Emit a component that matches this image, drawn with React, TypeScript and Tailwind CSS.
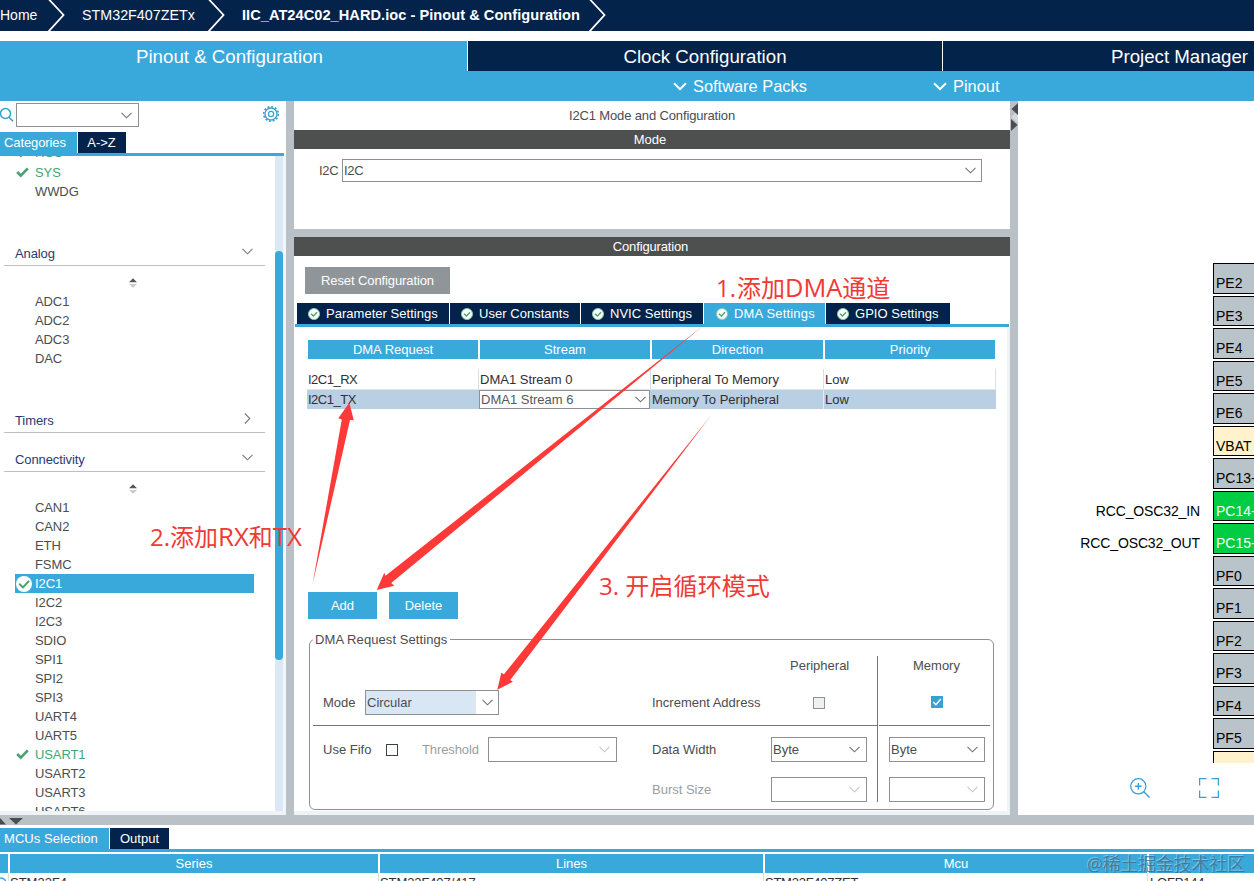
import React from "react";
import clsx from "clsx";

const analogItems = ["ADC1", "ADC2", "ADC3", "DAC"];

const connectivityItems = [
    "CAN1", "CAN2", "ETH", "FSMC", "I2C1", "I2C2", "I2C3", "SDIO", "SPI1",
    "SPI2", "SPI3", "UART4", "UART5", "USART1", "USART2", "USART3", "USART6",
];

const configTabs = [
    { label: "Parameter Settings", width: "w-[152px]" },
    { label: "User Constants", width: "w-[130px]" },
    { label: "NVIC Settings", width: "w-[122px]" },
    { label: "DMA Settings", width: "w-[121px]", active: true },
    { label: "GPIO Settings", width: "w-[124px]" },
];

const pins = [
    { name: "PE2" },
    { name: "PE3" },
    { name: "PE4" },
    { name: "PE5" },
    { name: "PE6" },
    { name: "VBAT", kind: "power" },
    { name: "PC13-" },
    { name: "PC14-", kind: "used", signal: "RCC_OSC32_IN" },
    { name: "PC15-", kind: "used", signal: "RCC_OSC32_OUT" },
    { name: "PF0" },
    { name: "PF1" },
    { name: "PF2" },
    { name: "PF3" },
    { name: "PF4" },
    { name: "PF5" },
    { name: "", kind: "power" },
];

const Chevron: React.FC<{ className?: string }> = ({ className }) => (
    <svg width="11" height="7" viewBox="0 0 11 7" fill="none" className={clsx("shrink-0", className)}>
        <path d="M0.5 0.8 5.5 5.8 10.5 0.8" stroke="currentColor" strokeWidth="1.1" />
    </svg>
);

const WideChevron: React.FC = () => (
    <svg width="14" height="9" viewBox="0 0 14 9" fill="none" className="shrink-0">
        <path d="M1 1.2 7 7.2 13 1.2" stroke="white" strokeWidth="2" />
    </svg>
);

const Check: React.FC = () => (
    <svg width="13" height="11" viewBox="0 0 13 11" fill="none">
        <path d="M1.2 5 4.8 8.6 11.8 1.4" stroke="#45a572" strokeWidth="2.7" />
    </svg>
);

const CheckCircle: React.FC<{ size: number }> = ({ size }) => (
    <svg width={size} height={size} viewBox="0 0 16 16" fill="none" className="shrink-0">
        <circle cx="8" cy="8" r="8" fill="white" />
        <path d="M3.2 7.8 7 11.4 13 4.8" stroke="#3fa56b" strokeWidth="2" />
    </svg>
);

const TabCheck: React.FC = () => (
    <svg width="12" height="12" viewBox="0 0 12 12" fill="none" className="shrink-0">
        <circle cx="6" cy="6" r="5.5" fill="white" stroke="#8ccba6" />
        <path d="M3 5.8 5.4 8.1 9 4.2" stroke="#3fa56b" strokeWidth="1.4" />
    </svg>
);

const Combo: React.FC<{ value?: string; disabled?: boolean; className?: string }> = ({ value, disabled, className }) => (
    <div className={clsx("flex items-center justify-between border border-[#8d9196] bg-white pl-px", className)}>
        <span>{value}</span>
        <Chevron className={disabled ? "text-[#c3c6ca]" : "text-[#6f7377]"} />
    </div>
);

const Crumb: React.FC = () => (
    <svg width="17" height="31" viewBox="0 0 17 31" fill="none" className="shrink-0">
        <path d="M1 -0.5 15.5 15 0.5 31.5" stroke="white" strokeWidth="1.8" />
    </svg>
);

const SortArrows: React.FC = () => (
    <div className="flex h-[26px] shrink-0 justify-center pr-[9px] pt-3">
        <svg width="10" height="10" viewBox="0 0 10 10">
            <path d="M1 4.3 5 0.3 9 4.3Z" fill="#55585b" />
            <path d="M1 6 5 9.8 9 6Z" fill="#c9cbcd" />
        </svg>
    </div>
);

const SectionHeader: React.FC<{ title: string; open?: boolean; className?: string }> = ({ title, open, className }) => (
    <div className={clsx("ml-1 flex h-6 w-[261px] shrink-0 justify-between border-b border-[#bcbfc6] pl-[11px] pr-3 text-[#2c3873]", className)}>
        <span className="h-[23px] leading-[23px] tracking-[-0.1px]">{title}</span>
        <Chevron className={clsx("mt-1.5 text-[#77797c]", !open && "-rotate-90")} />
    </div>
);

const Item: React.FC<{ name: string }> = ({ name }) => {
    const selected = name === "I2C1";
    const enabled = ["RCC", "SYS", "USART1"].includes(name);
    return (
        <div
            className={clsx(
                "ml-[15px] flex h-[19px] w-[239px] shrink-0 items-center tracking-[-0.1px]",
                selected && "bg-[#39a9dc] text-white",
                enabled && "text-[#45a572]"
            )}
        >
            <span className="w-5 pl-px">
                {selected && <CheckCircle size={16} />}
                {enabled && <Check />}
            </span>
            {name}
        </div>
    );
};

const Header: React.FC = () => (
    <header className="shrink-0 text-white">
        <div className="flex h-[31px] items-center bg-[#03234b] text-sm">
            <span className="w-12 shrink-0 pb-px">Home</span>
            <Crumb />
            <span className="w-[143px] shrink-0 pl-[17px] text-[14.3px]">STM32F407ZETx</span>
            <Crumb />
            <span className="w-[364px] shrink-0 whitespace-nowrap pl-[17px] text-[14.6px] font-bold tracking-[0.04px]">
                IIC_AT24C02_HARD.ioc - Pinout &amp; Configuration
            </span>
            <Crumb />
        </div>
        <div className="mt-2.5 flex h-[30px] bg-white text-center text-[18.7px] leading-8">
            <div className="w-[467px] shrink-0 bg-[#39a9dc] pr-2">Pinout &amp; Configuration</div>
            <div className="ml-px w-[474px] shrink-0 bg-[#03234b]">Clock Configuration</div>
            <div className="ml-px w-[473px] shrink-0 bg-[#03234b]">Project Manager</div>
        </div>
        <div className="flex h-[30px] items-center bg-[#39a9dc] pl-[673px] text-[16.4px] leading-6">
            <div className="flex w-[260px] items-center gap-1.5">
                <WideChevron />
                <span>Software Packs</span>
            </div>
            <div className="flex items-center gap-1.5">
                <WideChevron />
                <span>Pinout</span>
            </div>
        </div>
    </header>
);

const Sidebar: React.FC = () => (
    <aside className="flex w-[286px] shrink-0 flex-col bg-white">
        <div className="flex h-[31px] items-start pt-0.5">
            <svg width="14" height="16" viewBox="0 0 14 16" fill="none" className="mt-1">
                <circle cx="5.5" cy="6.5" r="5" stroke="#39a0d4" strokeWidth="1.5" />
                <path d="M9 10.2 13 14.2" stroke="#39a0d4" strokeWidth="1.6" />
            </svg>
            <Combo className="ml-0.5 h-6 w-[123px] pr-1.5" />
            <svg width="18" height="18" viewBox="0 0 18 18" fill="none" className="ml-[123px] mt-0.5">
                <circle cx="9" cy="9" r="6" stroke="#39a0d4" strokeWidth="1.3" />
                <circle cx="9" cy="9" r="7.3" stroke="#39a0d4" strokeWidth="1.6" strokeDasharray="2 1.82" />
                <circle cx="9" cy="9" r="2.6" stroke="#39a0d4" strokeWidth="1.2" />
            </svg>
        </div>
        <div className="flex h-6 w-[284px] gap-px border-b-[3px] border-[#39a9dc] leading-[21px] text-white">
            <div className="w-[77px] bg-[#39a9dc] pl-1 tracking-[-0.1px]">Categories</div>
            <div className="w-12 bg-[#03234b] pr-px text-center">A-&gt;Z</div>
        </div>
        <div className="flex h-[656px] border-b border-[#eef2f6]">
            <div className="flex w-[275px] flex-col overflow-hidden">
                <div className="-mt-[13px] flex flex-col">
                    <Item name="RCC" />
                    <div className="h-px" />
                    <Item name="SYS" />
                    <Item name="WWDG" />
                </div>
                <SectionHeader title="Analog" open className="mt-[41px]" />
                <SortArrows />
                {analogItems.map((name) => (
                    <Item key={name} name={name} />
                ))}
                <SectionHeader title="Timers" className="mt-[41px]" />
                <SectionHeader title="Connectivity" open className="mt-[15px]" />
                <SortArrows />
                {connectivityItems.map((name) => (
                    <Item key={name} name={name} />
                ))}
            </div>
            <div className="w-2 bg-[#dbe8f5] pt-[95px]">
                <div className="h-[409px] rounded-full bg-[#39a9dc]" />
            </div>
            <div className="w-[3px] bg-[#f1f6fa]" />
        </div>
        <div className="flex-1 bg-[#f1f4f6]" />
    </aside>
);

const CheckBox: React.FC<{ className?: string }> = ({ className }) => (
    <div className={clsx("size-3 shrink-0 border", className)} />
);

const RequestTable: React.FC = () => (
    <div className="ml-[13px] w-[689px] text-[#2e3033]">
        <div className="ml-px flex h-[19px] gap-0.5 text-center leading-[19px] text-white">
            <div className="w-[170px] bg-[#39a9dc]">DMA Request</div>
            <div className="w-[170px] bg-[#39a9dc]">Stream</div>
            <div className="w-[171px] bg-[#39a9dc]">Direction</div>
            <div className="w-[170px] bg-[#39a9dc]">Priority</div>
        </div>
        <div className="mt-2.5 flex h-[21px] border-b border-[#e2e5e8] leading-[22px]">
            <div className="w-[172px] border-r border-[#dcdfe2] pl-px tracking-[-0.5px]">I2C1_RX</div>
            <div className="w-[172px] border-r border-[#dcdfe2] pl-px">DMA1 Stream 0</div>
            <div className="w-[173px] border-r border-[#dcdfe2] pl-px">Peripheral To Memory</div>
            <div className="w-[172px] border-r border-[#dcdfe2] pl-px">Low</div>
        </div>
        <div className="flex h-[19px] bg-[#b8cfe4] leading-5">
            <div className="w-[172px] pl-px tracking-[-0.5px]">I2C1_TX</div>
            <Combo value="DMA1 Stream 6" className="w-[171px] pr-[3px] leading-[17px] text-[#55585c]" />
            <div className="w-[174px] border-r border-[#e4ebf2] pl-0.5">Memory To Peripheral</div>
            <div className="pl-px">Low</div>
        </div>
    </div>
);

const RequestSettings: React.FC = () => (
    <div className="ml-[15px] mt-5 flex h-[171px] w-[685px] rounded-md border border-[#8d9196]">
        <div className="flex w-[568px] flex-col">
            <div className="-mt-2 ml-[3px] h-4 w-[137px] whitespace-nowrap bg-white pl-0.5 leading-4 tracking-[0.08px]">
                DMA Request Settings
            </div>
            <div className="ml-[3px] mt-2 flex h-[70px] flex-col border-b border-[#4f81a8] pl-[10px]">
                <div className="flex h-5 items-center pl-[467px]">Peripheral</div>
                <div className="mt-[14px] flex h-[25px] items-center">
                    <span className="w-[42px]">Mode</span>
                    <div className="flex h-[25px] w-[134px] items-center border border-[#8d9196]">
                        <span className="h-full w-[110px] bg-[#d9e7f5] pl-px leading-[23px]">Circular</span>
                        <Chevron className="ml-1.5 text-[#6f7377]" />
                    </div>
                    <span className="ml-[153px] w-[161px]">Increment Address</span>
                    <CheckBox className="border-[#8d9196] bg-[#eef1f2]" />
                </div>
            </div>
            <div className="mt-[11px] flex h-[25px] items-center pl-[13px]">
                <span className="w-[63px]">Use Fifo</span>
                <CheckBox className="border-[#3f4245] bg-white" />
                <span className="ml-6 w-[66px] tracking-[-0.1px] text-[#9b9ea1]">Threshold</span>
                <Combo disabled className="h-[25px] w-[129px] pr-1.5" />
                <span className="ml-[35px] w-[119px]">Data Width</span>
                <Combo value="Byte" className="h-[25px] w-[96px] pr-1.5" />
            </div>
            <div className="mt-[15px] flex h-[25px] items-center pl-[342px] text-[#9b9ea1]">
                <span className="w-[119px]">Burst Size</span>
                <Combo disabled className="h-[25px] w-[96px] pr-1.5" />
            </div>
        </div>
        <div className="-ml-px mt-4 h-[146px] w-px shrink-0 bg-[#4f81a8]" />
        <div className="ml-px mt-4 flex h-[147px] w-[111px] flex-col">
            <div className="h-[70px] border-b border-[#4f81a8] pl-[34px]">
                <div className="h-5 leading-5">Memory</div>
                <div className="ml-[18px] mt-5 size-3 bg-[#39a0d4]">
                    <svg width="12" height="12" viewBox="0 0 12 12" fill="none">
                        <path d="M2.3 5.9 4.9 8.7 9.8 3" stroke="white" strokeWidth="1.4" />
                    </svg>
                </div>
            </div>
            <Combo value="Byte" className="ml-2.5 mt-[11px] h-[25px] w-[96px] pr-1.5" />
            <Combo disabled className="ml-2.5 mt-[15px] h-[25px] w-[96px] pr-1.5" />
        </div>
    </div>
);

const ConfigPanel: React.FC = () => (
    <main className="flex w-[716px] shrink-0 flex-col">
        <div className="h-[29px] bg-white text-center leading-[29px] tracking-[-0.14px]">I2C1 Mode and Configuration</div>
        <div className="h-[19px] bg-[#4d504f] pr-1 text-center leading-[19px] text-white">Mode</div>
        <div className="flex h-[80px] bg-white pl-[25px] pt-2.5">
            <span className="w-[23px] leading-[23px] tracking-[-0.3px]">I2C</span>
            <Combo value="I2C" className="h-[23px] w-[640px] pr-[5px] tracking-[-0.3px]" />
        </div>
        <div className="h-2 bg-[#b9c1c6]" />
        <div className="h-[19px] bg-[#4d504f] pr-[3px] text-center leading-[19px] tracking-[-0.15px] text-white">Configuration</div>
        <div className="flex h-[559px] flex-col border-b-4 border-[#eef3f6] bg-white">
            <div className="ml-[11px] mt-[11px] h-[27px] w-[145px] bg-[#909599] text-center leading-[27px] tracking-[-0.1px] text-white">
                Reset Configuration
            </div>
            <div className="ml-px mt-[9px] flex h-6 w-[714px] gap-px border-b-[3px] border-[#39a9dc] pl-0.5">
                {configTabs.map((tab) => (
                    <div
                        key={tab.label}
                        className={clsx(
                            "flex items-center gap-1.5 whitespace-nowrap text-white",
                            tab.width,
                            tab.active ? "bg-[#39a9dc] pl-3 tracking-[0.17px]" : "bg-[#03234b] pl-[11px] tracking-[0.03px]"
                        )}
                    >
                        <TabCheck />
                        {tab.label}
                    </div>
                ))}
            </div>
            <div className="flex h-[484px] flex-col border-r-[3px] border-[#eef3f6] pt-[13px]">
                <RequestTable />
                <div className="ml-[14px] mt-[183px] flex gap-3 text-center leading-[27px] text-white">
                    <div className="h-[27px] w-[69px] bg-[#39a9dc]">Add</div>
                    <div className="h-[27px] w-[69px] bg-[#39a9dc]">Delete</div>
                </div>
                <RequestSettings />
            </div>
        </div>
    </main>
);

const PinoutView: React.FC = () => (
    <section className="flex min-w-0 flex-1 flex-col bg-white text-sm text-black">
        <div className="mt-[162px] flex h-[500px] shrink-0 flex-col gap-0.5 overflow-hidden">
            {pins.map((pin, index) => (
                <div key={index} className="flex h-[30.5px] shrink-0 justify-end">
                    <span className="pr-[13px] pt-2.5 leading-5 tracking-[-0.13px]">{pin.signal}</span>
                    <div
                        className={clsx(
                            "w-[41px] border-y border-l border-black pl-0.5 pt-[9px] leading-5",
                            pin.kind === "power" && "bg-[#fff2cc]",
                            pin.kind === "used" && "bg-[#00cc44] text-white",
                            !pin.kind && "bg-[#b9c4ca]"
                        )}
                    >
                        {pin.name}
                    </div>
                </div>
            ))}
        </div>
        <div className="mt-[15px] flex gap-[49px] pl-28">
            <svg width="20" height="20" viewBox="0 0 20 20" fill="none" stroke="#39a0d4">
                <circle cx="8.3" cy="8.3" r="7.6" strokeWidth="1.3" />
                <path d="M8.3 5v6.6M5 8.3h6.6M13.8 13.8 19.6 19.6" strokeWidth="1.4" />
            </svg>
            <svg width="20" height="20" viewBox="0 0 20 20" fill="none" stroke="#39a0d4" strokeWidth="1.3">
                <path d="M0.6 7.5V0.6H7.5M12.5 0.6H19.4V7.5M19.4 12.5V19.4H12.5M7.5 19.4H0.6V12.5" />
            </svg>
        </div>
    </section>
);

const BottomPanel: React.FC = () => (
    <footer className="h-14 shrink-0 bg-white pt-[3px]">
        <div className="flex h-6 gap-px border-b-[3px] border-[#39a9dc] leading-[21px] text-white">
            <div className="w-[109px] bg-[#39a9dc] pl-1 tracking-[0.05px]">MCUs Selection</div>
            <div className="w-[59px] bg-[#03234b] text-center">Output</div>
        </div>
        <div className="mt-0.5 flex h-[19px] gap-0.5 text-center leading-[19px] text-white">
            <div className="w-2 shrink-0 bg-[#39a9dc]" />
            <div className="w-[368px] shrink-0 bg-[#39a9dc]">Series</div>
            <div className="w-[383px] shrink-0 bg-[#39a9dc]">Lines</div>
            <div className="w-[382px] shrink-0 bg-[#39a9dc]">Mcu</div>
            <div className="flex-1 bg-[#39a9dc]" />
        </div>
        <div className="flex h-[8px] overflow-hidden leading-[19px] text-[#2e3033]">
            <div className="w-[9px] shrink-0 border-r border-[#dcdfe2] pt-1">
                <svg width="8" height="12" viewBox="0 0 8 12" fill="none">
                    <circle cx="1" cy="6" r="5" stroke="#39a0d4" strokeWidth="1.3" />
                </svg>
            </div>
            <div className="w-[370px] shrink-0 border-r border-[#dcdfe2] pl-px">STM32F4</div>
            <div className="w-[385px] shrink-0 border-r border-[#dcdfe2] pl-px tracking-[-0.1px]">STM32F407/417</div>
            <div className="w-[384px] shrink-0 border-r border-[#dcdfe2] pl-px tracking-[-0.25px]">STM32F407ZET</div>
            <div className="pl-0.5 tracking-[-0.2px]">LQFP144</div>
        </div>
    </footer>
);

const Annotations: React.FC = () => (
    <div className="pointer-events-none absolute inset-0 whitespace-nowrap font-['Open_Sans','Noto_Sans_CJK_SC',sans-serif] text-2xl leading-8 text-[#f03a36]">
        <svg width="1254" height="881" viewBox="0 0 1254 881" fill="#fd3a37" className="absolute inset-0">
            <path d="M704 325 385.5 575.8 384.3 572.7 376.7 590 394.3 585.7 391.2 583Z" />
            <path d="M312.5 584.5 341.8 419.5 338.3 418.3 349.3 402.7 353.8 420.3 350 420Z" />
            <path d="M711 415.5 503.9 674.3 501.3 672.7 497.3 689.8 512.8 681.7 510.3 680Z" />
        </svg>
        <span className="absolute left-[716px] top-[271px]">
            1.<span className="ml-px">添加</span>
            <span className="text-[25.4px]">DMA</span>通道
        </span>
        <span className="absolute left-[150px] top-[520px]">
            2.添加<span className="text-[25.8px]">RX</span>和<span className="text-[25.8px]">TX</span>
        </span>
        <span className="absolute left-[599px] top-[570px] text-[24.1px]">3. 开启循环模式</span>
        <span className="absolute left-[1087px] top-[848px] text-[17.8px] text-[#3f6b88]/80 [text-shadow:-1px_-1px_0_rgba(255,255,255,0.35)]">
            @稀土掘金技术社区
        </span>
    </div>
);

const App: React.FC = () => {
    return (
        <div className="relative flex h-[881px] w-[1254px] flex-col overflow-hidden bg-white font-['Liberation_Sans',Arial,sans-serif] text-[13px] text-[#4b4d50]">
            <Header />
            <div className="flex h-[714px] shrink-0 bg-[#b9c1c6]">
                <Sidebar />
                <div className="w-2 shrink-0" />
                <ConfigPanel />
                <div className="w-2 shrink-0 pl-px pt-0.5">
                    <svg width="7" height="28" viewBox="0 0 7 28">
                        <path d="M0 14 7 8V20Z" fill="#d5d9dc" />
                        <path d="M7 0V12L0.5 6Z" fill="#4a4c4e" />
                        <path d="M0 16V28L6.5 22Z" fill="#4a4c4e" />
                    </svg>
                </div>
                <PinoutView />
            </div>
            <div className="h-2.5 shrink-0 bg-[#b9c1c6] pt-[3px]">
                <svg width="24" height="7" viewBox="0 0 24 7" fill="#4a4c4e">
                    <path d="M0 0 6 6.5H0Z" />
                    <path d="M9 0H23L16 6.5Z" />
                </svg>
            </div>
            <BottomPanel />
            <Annotations />
        </div>
    );
};

export default App;
